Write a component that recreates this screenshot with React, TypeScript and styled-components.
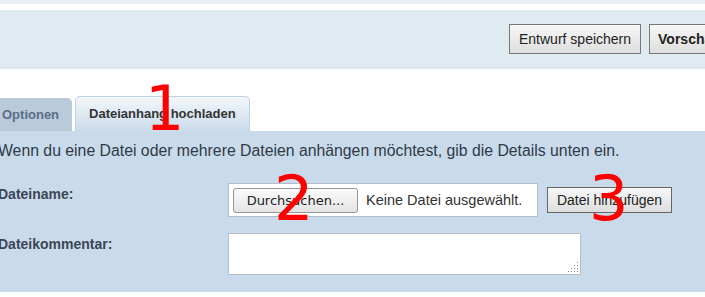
import React from 'react';
import styled, {createGlobalStyle, css} from "styled-components";

const GlobalStyle = createGlobalStyle`
  html, body {
    margin: 0;
    padding: 0;
    background: #ffffff;
    overflow: hidden;
  }

  body {
    font-family: "Liberation Sans", Arial, sans-serif;
    color: #333333;
  }
`;

export const Page = styled.div`
  position: relative;
  width: 705px;
  height: 297px;
  overflow: hidden;
`;

export const TopStrip = styled.div`
  height: 4px;
  background: #e9eef2;
  margin-bottom: 6px;
`;

export const ActionBar = styled.div`
  height: 59px;
  background: #e0eaf1;
  display: flex;
  align-items: flex-start;
  gap: 8px;
  padding: 14px 0 0 509px;
  box-sizing: border-box;
  white-space: nowrap;
`;

// plain grey form buttons, same look for the action bar and the upload row
export const FormButton = styled.button<{ primary?: boolean }>`
  height: 30px;
  padding: 0 9px;
  border: 1px solid #777777;
  background: linear-gradient(#f7f7f7, #dedede);
  font-family: "Liberation Sans", Arial, sans-serif;
  font-size: 14px;
  color: #222222;
  flex-shrink: 0;
  ${({primary}) => primary && css`
    font-weight: bold;
    padding: 0 8px;
    min-width: 100px;
    text-align: left;
  `}
`;

export const Main = styled.div`
  margin-left: -11px;
  margin-top: 26px;
`;

export const TabRow = styled.div`
  display: flex;
  align-items: flex-end;
  gap: 3px;
  height: 36px;
`;

export const Tab = styled.div<{ active?: boolean }>`
  height: 33px;
  padding: 0 13px;
  display: flex;
  align-items: center;
  box-sizing: border-box;
  border-radius: 5px 5px 0 0;
  font-size: 13px;
  font-weight: bold;
  background: #b9cadb;
  color: #5c6f86;
  ${({active}) => active && css`
    height: 36px;
    padding-bottom: 3px;
    margin-bottom: -1px;
    border: 1px solid #bfd2e3;
    border-bottom: none;
    background: linear-gradient(#f3f7fb, #c9dbea);
    color: #333333;
  `}
`;

export const Panel = styled.div`
  background: #c9dbea;
  height: 161px;
  padding: 11px 0 0 9px;
  box-sizing: border-box;
`;

export const Intro = styled.p`
  margin: 0 0 23px 0;
  font-size: 15.8px;
  line-height: 18px;
  color: #2f3a48;
  white-space: nowrap;
`;

export const FormGrid = styled.div`
  display: grid;
  grid-template-columns: 230px auto;
  row-gap: 16px;
`;

export const Label = styled.div`
  font-size: 14px;
  font-weight: bold;
  line-height: 16px;
  padding-top: 3px;
  color: #3a4657;
`;

export const FieldGroup = styled.div`
  display: flex;
  align-items: center;
  gap: 9px;
`;

export const FileBox = styled.div`
  width: 310px;
  height: 34px;
  box-sizing: border-box;
  border: 1px solid #b3bbc4;
  background: #ffffff;
  display: flex;
  align-items: center;
  gap: 8px;
  padding-left: 4px;
`;

export const BrowseButton = styled.button`
  width: 125px;
  height: 25px;
  border: 1px solid #959595;
  border-radius: 3px;
  background: linear-gradient(#fbfbfb, #e4e4e4);
  font-family: "DejaVu Sans", sans-serif;
  font-size: 13px;
  color: #222222;
  padding: 0;
`;

export const FileName = styled.span`
  font-size: 14.5px;
  color: #333333;
  white-space: nowrap;
`;

export const AddButton = styled(FormButton)`
  height: 26px;
  width: 125px;
  padding: 0;
  border-color: #666666;
`;

export const CommentWrap = styled.div`
  position: relative;
  width: 353px;
  height: 42px;
`;

export const Comment = styled.textarea`
  width: 100%;
  height: 100%;
  box-sizing: border-box;
  border: 1px solid #b4bdc8;
  background: #ffffff;
  resize: none;
  margin: 0;
  outline: none;
`;

export const Grip = styled.svg`
  position: absolute;
  right: 2px;
  bottom: 2px;
`;

// red numbers painted over the screenshot
export const Marker = styled.span<{ x: number; y: number }>`
  position: absolute;
  left: ${({x}) => x}px;
  top: ${({y}) => y}px;
  font-family: "DejaVu Sans", sans-serif;
  font-size: 62px;
  line-height: 1;
  color: #ff0000;
  pointer-events: none;
`;

const ResizeGrip = () => {
    const dots: [number, number][] = [];
    for (let row = 0; row < 4; row++) {
        for (let col = 3 - row; col < 4; col++) {
            dots.push([col * 3, row * 3]);
        }
    }
    return (
        <Grip width="11" height="11" viewBox="0 0 11 11">
            {dots.map(([x, y]) => (
                <rect key={`${x}-${y}`} x={x} y={y} width="1" height="1" fill="#8a8a8a"/>
            ))}
        </Grip>
    );
};

export default function App() {
    return (
        <Page>
            <GlobalStyle/>
            <TopStrip/>
            <ActionBar>
                <FormButton>Entwurf speichern</FormButton>
                <FormButton primary>Vorschau</FormButton>
            </ActionBar>
            <Main>
                <TabRow>
                    <Tab>Optionen</Tab>
                    <Tab active>Dateianhang hochladen</Tab>
                </TabRow>
                <Panel>
                    <Intro>Wenn du eine Datei oder mehrere Dateien anhängen möchtest, gib die Details unten ein.</Intro>
                    <FormGrid>
                        <Label>Dateiname:</Label>
                        <FieldGroup>
                            <FileBox>
                                <BrowseButton>Durchsuchen...</BrowseButton>
                                <FileName>Keine Datei ausgewählt.</FileName>
                            </FileBox>
                            <AddButton>Datei hinzufügen</AddButton>
                        </FieldGroup>
                        <Label>Dateikommentar:</Label>
                        <FieldGroup>
                            <CommentWrap>
                                <Comment/>
                                <ResizeGrip/>
                            </CommentWrap>
                        </FieldGroup>
                    </FormGrid>
                </Panel>
            </Main>
            <Marker x={145} y={78}>1</Marker>
            <Marker x={274} y={168}>2</Marker>
            <Marker x={589} y={168}>3</Marker>
        </Page>
    );
}
